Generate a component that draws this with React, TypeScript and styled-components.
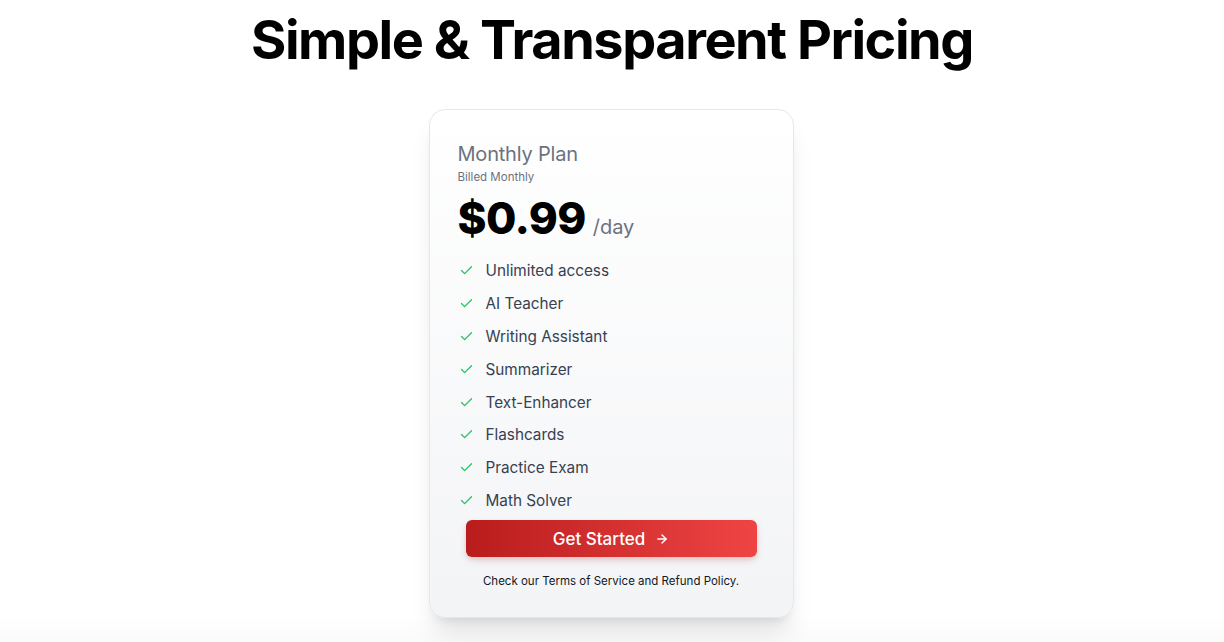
import React from "react";
import styled, { createGlobalStyle } from "styled-components";

const Global = createGlobalStyle`
  html, body { margin: 0; padding: 0; background: #ffffff; }
  body { font-family: Inter, "Helvetica Neue", Arial, sans-serif; -webkit-font-smoothing: antialiased; }
  * { box-sizing: border-box; }
`;

const Page = styled.main`
  min-height: 642px;
  display: flex;
  flex-direction: column;
  align-items: center;
  padding-top: 6px;
  background: linear-gradient(to bottom, #ffffff 0%, #ffffff 96%, #fafafa 100%);
`;

const Title = styled.h1`
  margin: 0;
  font-family: Inter, Arial, sans-serif;
  font-size: 54px;
  line-height: 68px;
  font-weight: 700;
  letter-spacing: -1.45px;
  color: #000;
`;

const Card = styled.section`
  margin-top: 35px;
  margin-left: -2px;
  width: 365px;
  height: 509px;
  border: 1px solid #e5e7eb;
  border-radius: 16px;
  background: linear-gradient(to bottom, #ffffff 0%, #f3f4f6 100%);
  box-shadow: 0 20px 25px -5px rgba(0, 0, 0, 0.1), 0 8px 10px -6px rgba(0, 0, 0, 0.1);
  padding: 30px 28px 0 28px;
  display: flex;
  flex-direction: column;
`;

const PlanName = styled.h2`
  margin: 0;
  font-size: 20px;
  line-height: 28px;
  font-weight: 400;
  color: #6b7280;
  letter-spacing: -0.2px;
`;

const Billed = styled.p`
  margin: 1px 0 0 0;
  font-size: 11.5px;
  line-height: 16px;
  color: #6b7280;
`;

const PriceRow = styled.div`
  margin-top: 7px;
  display: flex;
  align-items: baseline;
  gap: 7px;
`;

const Price = styled.span`
  font-size: 44px;
  line-height: 52px;
  font-weight: 800;
  color: #000;
  letter-spacing: -0.6px;
`;

const Per = styled.span`
  font-size: 20px;
  color: #6b7280;
`;

const Features = styled.ul`
  list-style: none;
  margin: 10px 0 0 0;
  padding: 0;
  display: flex;
  flex-direction: column;
`;

const Feature = styled.li`
  display: flex;
  align-items: center;
  gap: 12px;
  height: 32.9px;
  padding-left: 1px;
  font-size: 15.3px;
  color: #374151;
`;

const Button = styled.button`
  margin: 3px 8px 0 8px;
  height: 37px;
  border: none;
  border-radius: 6px;
  background: linear-gradient(to right, #b91c1c, #ef4444);
  box-shadow: 0 4px 8px -2px rgba(185, 28, 28, 0.25), 0 2px 4px rgba(0, 0, 0, 0.06);
  color: #fff;
  font-family: Inter, Arial, sans-serif;
  font-size: 17px;
  font-weight: 500;
  display: flex;
  align-items: center;
  justify-content: center;
  gap: 10px;
  cursor: pointer;
`;

const Note = styled.p`
  margin: 17px 0 0 0;
  text-align: center;
  font-size: 11.5px;
  color: #111827;
`;

const Check = () => (
  <svg width="15" height="15" viewBox="0 0 24 24" fill="none" stroke="#22c55e" strokeWidth="2.1" strokeLinecap="round" strokeLinejoin="round">
    <path d="M20 6 9 17l-5-5" />
  </svg>
);

const Arrow = () => (
  <svg width="14" height="14" viewBox="0 0 24 24" fill="none" stroke="#fff" strokeWidth="2.4" strokeLinecap="round" strokeLinejoin="round">
    <path d="M5 12h14" />
    <path d="m12 5 7 7-7 7" />
  </svg>
);

const features = [
  "Unlimited access",
  "AI Teacher",
  "Writing Assistant",
  "Summarizer",
  "Text-Enhancer",
  "Flashcards",
  "Practice Exam",
  "Math Solver",
];

export default function App() {
  return (
    <>
      <Global />
      <Page>
        <Title>Simple &amp; Transparent Pricing</Title>
        <Card>
          <PlanName>Monthly Plan</PlanName>
          <Billed>Billed Monthly</Billed>
          <PriceRow>
            <Price>$0.99</Price>
            <Per>/day</Per>
          </PriceRow>
          <Features>
            {features.map((f) => (
              <Feature key={f}>
                <Check />
                {f}
              </Feature>
            ))}
          </Features>
          <Button>
            Get Started <Arrow />
          </Button>
          <Note>Check our Terms of Service and Refund Policy.</Note>
        </Card>
      </Page>
    </>
  );
}
